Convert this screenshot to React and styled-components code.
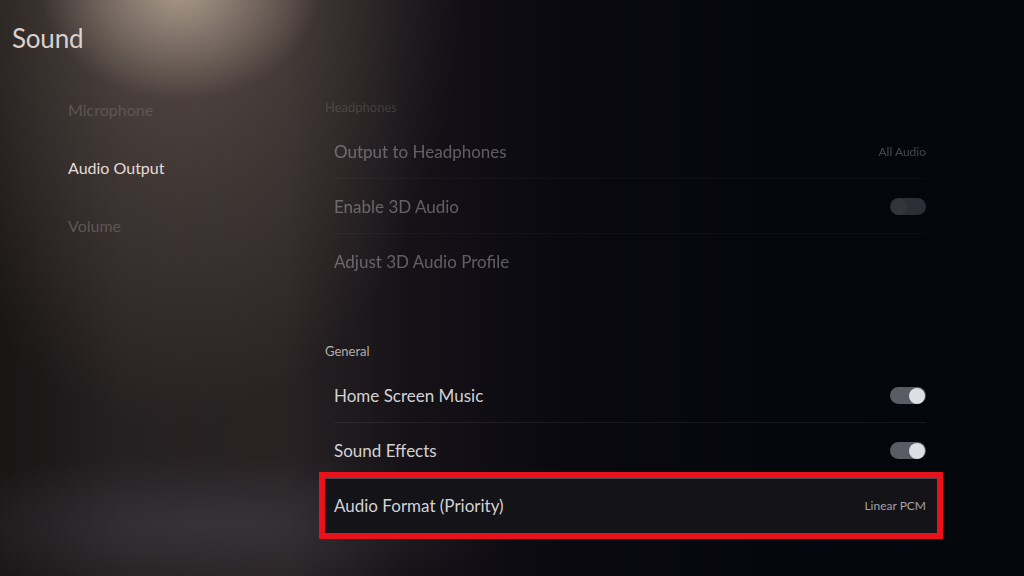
import React from "react";
import styled, { createGlobalStyle } from "styled-components";

const GlobalStyle = createGlobalStyle`
  html, body {
    margin: 0;
    padding: 0;
    height: 100%;
    background: #06060d;
  }
  #root {
    height: 100%;
  }
`;

const Screen = styled.div`
  width: 1024px;
  height: 576px;
  overflow: hidden;
  display: grid;
  grid-template-columns: 325px 1fr;
  font-family: Lato, "Open Sans", sans-serif;
  background:
    radial-gradient(ellipse 140px 110px at 180px -10px, rgba(225, 205, 185, 0.6), rgba(225, 205, 185, 0) 100%),
    radial-gradient(ellipse 290px 470px at 175px -40px, rgba(150, 130, 115, 0.45), rgba(150, 130, 115, 0) 100%),
    radial-gradient(ellipse 320px 70px at 200px 525px, rgba(110, 115, 130, 0.22), rgba(110, 115, 130, 0) 100%),
    linear-gradient(90deg, #181515 0%, #252021 12%, #282223 28%, #151217 40%, #0a0911 55%, #06060e 75%, #05050c 100%);
`;

const Sidebar = styled.aside`
  display: flex;
  flex-direction: column;
`;

const Title = styled.h1`
  margin: 0;
  padding: 22px 0 0 12px;
  height: 58px;
  box-sizing: border-box;
  font-size: 26px;
  font-weight: 400;
  color: #d9d2cf;
  letter-spacing: -0.2px;
`;

const Nav = styled.nav`
  display: flex;
  flex-direction: column;
  padding: 23px 0 0 68px;
`;

const NavItem = styled.div`
  height: 58px;
  line-height: 58px;
  font-size: 16px;
  color: ${({ $active }) => ($active ? "#e2ddda" : "#5e5555")};
`;

const Panel = styled.main`
  display: flex;
  flex-direction: column;
  padding-top: 96px;
  width: 612px;
`;

const Section = styled.section`
  display: flex;
  flex-direction: column;
  opacity: ${({ $faded }) => ($faded ? 0.4 : 1)};
  margin-top: ${({ $gap }) => $gap || 0}px;
  mask-image: ${({ $faded }) =>
    $faded
      ? "linear-gradient(180deg, rgba(0,0,0,0.25) 0px, rgba(0,0,0,1) 40px)"
      : "none"};
`;

const SectionHeader = styled.div`
  line-height: 22px;
  margin-bottom: 6px;
  font-size: 13px;
  color: #b4afad;
`;

const Row = styled.div`
  height: 55px;
  padding: 0 11px 0 9px;
  background: ${({ $selected }) => ($selected ? "#131318" : "transparent")};
  box-shadow: ${({ $selected }) =>
    $selected ? "inset 0 1px 0 #4a4a50" : "none"};
  outline: ${({ $selected }) => ($selected ? "6px solid #e8121c" : "none")};
`;

const RowInner = styled.div`
  height: 100%;
  box-sizing: border-box;
  display: flex;
  align-items: center;
  justify-content: space-between;
  padding-top: 1px;
  border-bottom: 1px solid
    ${({ $last }) => ($last ? "transparent" : "rgba(255, 255, 255, 0.07)")};
`;

const Label = styled.span`
  font-size: 17px;
  color: #d2d2d6;
`;

const Value = styled.span`
  font-size: 12px;
  color: #a4a4aa;
`;

const Track = styled.span`
  width: 36px;
  height: 17px;
  border-radius: 9px;
  background: ${({ $on }) => ($on ? "#5b5b66" : "#6a6a76")};
  display: flex;
  align-items: center;
  justify-content: ${({ $on }) => ($on ? "flex-end" : "flex-start")};
  padding: 0 1px;
  box-sizing: border-box;
`;

const Knob = styled.span`
  width: 16px;
  height: 16px;
  border-radius: 50%;
  background: ${({ $on }) => ($on ? "#dedee6" : "#7a7a86")};
`;

const Toggle = ({ on }) => (
  <Track $on={on}>
    <Knob $on={on} />
  </Track>
);

const SettingRow = ({ label, value, toggle, selected, last }) => (
  <Row $selected={selected}>
    <RowInner $last={last || selected}>
      <Label>{label}</Label>
      {value && <Value>{value}</Value>}
      {toggle !== undefined && <Toggle on={toggle} />}
    </RowInner>
  </Row>
);

export default function App() {
  return (
    <>
      <GlobalStyle />
      <Screen>
        <Sidebar>
          <Title>Sound</Title>
          <Nav>
            <NavItem>Microphone</NavItem>
            <NavItem $active>Audio Output</NavItem>
            <NavItem>Volume</NavItem>
          </Nav>
        </Sidebar>
        <Panel>
          <Section $faded>
            <SectionHeader>Headphones</SectionHeader>
            <SettingRow label="Output to Headphones" value="All Audio" />
            <SettingRow label="Enable 3D Audio" toggle={false} />
            <SettingRow label="Adjust 3D Audio Profile" last />
          </Section>
          <Section $gap={51}>
            <SectionHeader>General</SectionHeader>
            <SettingRow label="Home Screen Music" toggle={true} />
            <SettingRow label="Sound Effects" toggle={true} />
            <SettingRow label="Audio Format (Priority)" value="Linear PCM" selected />
          </Section>
        </Panel>
      </Screen>
    </>
  );
}
